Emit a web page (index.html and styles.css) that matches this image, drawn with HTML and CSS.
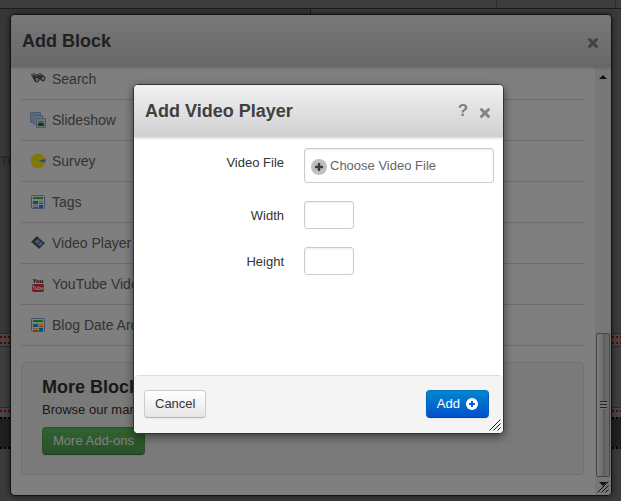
FILE: index.html
```html
<!DOCTYPE html>
<html lang="en">
<head>
  <meta charset="UTF-8">
  <meta name="viewport" content="width=device-width, initial-scale=1">
  <title>Add Video Player</title>
  <link rel="stylesheet" href="styles.css">
</head>
<body>
<!-- shared icons -->
<svg class="defs" aria-hidden="true">
  <symbol id="i-close" viewBox="0 0 12 12">
    <path d="M2.5 2.5l7 7M9.5 2.5l-7 7" fill="none" stroke="currentColor" stroke-width="3" stroke-linecap="round"/>
  </symbol>
  <symbol id="i-grip" viewBox="0 0 12 12">
    <path d="M.5 11.5l11-11M4.5 11.5l7-7M8.5 11.5l3-3" fill="none" stroke="#222"/>
  </symbol>
  <symbol id="i-page" viewBox="0 0 16 16">
    <rect x="1.500" y="1.500" width="13" height="13" rx="1" fill="#fff" stroke="#86a4e8"/>
    <path d="M3 3h10v2H3z" fill="#2cd020"/>
    <path d="M3 7h5v3H3zM9 11h4v3H9z" fill="#109cff"/>
    <path d="M9 7.500h4M3 11.500h5" stroke="#ffc400"/>
    <path d="M9 9.500h4M3 13.500h5" stroke="#ff5a22"/>
  </symbol>
</svg>

<div class="page">
  <div class="toolbar"><span></span><span></span></div>
  <div class="page-top"><div>Tu</div><div></div></div>
  <div class="drop-area double"><i class="dots"></i><i class="dots"></i></div>
  <div class="page-block"></div>
  <div class="drop-area"><i class="dots"></i></div>
  <div class="dark-band"><i class="dots"></i><i class="dots"></i></div>
</div>

<div class="dialog blocks-dialog" role="dialog" aria-labelledby="blocksTitle">
  <header class="titlebar">
    <h2 id="blocksTitle">Add Block</h2>
    <button class="icon-btn" aria-label="Close"><svg><use href="#i-close"/></svg></button>
  </header>
  <div class="scroller">
    <div class="blocks">
      <ul class="block-list">
        <li><a href="#">
          <svg viewBox="0 0 16 16"><path d="M1 3.500L4 2l3 1.500L10 2l3 1.500 2 4-2.500 2.500-3-2-1 2L5 11z" fill="#5c5c5c"/><path d="M2 4l3-1 2 3M8 4l3-1 2 2" fill="none" stroke="#ccc"/><ellipse cx="7" cy="8.500" rx="2" ry="2.500" fill="#b4d8fa" stroke="#444"/><ellipse cx="13" cy="7.500" rx="2" ry="2.500" fill="#b4d8fa" stroke="#444"/></svg>
          Search</a></li>
        <li><a href="#">
          <svg viewBox="0 0 16 16"><path d="M.5 .5h10v10H.5z" fill="#b4d4f6" stroke="#98b8dc"/><path d="M3.500 3.500h9v9h-9z" fill="#c4e0fa" stroke="#98b8dc"/><path d="M6.500 6.500h9v9h-9z" fill="#c9e8ff" stroke="#98b8dc"/><path d="M8 11.500q3-2 6 0V14H8z" fill="#108c18"/><path d="M9 9h4v2H9z" fill="#f09038"/></svg>
          Slideshow</a></li>
        <li><a href="#">
          <svg viewBox="0 0 16 16"><circle cx="8" cy="8" r="7.500" fill="#fff020"/><path d="M8 8l7.500-2v2z" fill="#4080f0"/><path d="M8 8h7.500l-.5 2z" fill="#e8a040"/></svg>
          Survey</a></li>
        <li><a href="#"><svg><use href="#i-page"/></svg>Tags</a></li>
        <li><a href="#">
          <svg viewBox="0 0 16 16"><path d="M7 1l8 7-6 6-8-7z" fill="#4a4e5a"/><path d="M7.500 4L10 6 7 9 4.500 7zM10.500 6.500L13 8.500l-3 3L7.500 9.500z" fill="#90acf0"/><path d="M7.500 2l7 6M2 7.500l7 6" stroke="#eee" stroke-dasharray="1 1"/></svg>
          Video Player</a></li>
        <li><a href="#">
          <svg class="youtube" viewBox="0 0 16 16"><text x="8" y="7">You</text><rect x="2" y="8" width="12" height="8" rx="2"/><text class="tube" x="8" y="14">Tube</text></svg>
          YouTube Video</a></li>
        <li><a href="#"><svg><use href="#i-page"/></svg>Blog Date Archive</a></li>
      </ul>
      <section class="more">
        <h3>More Blocks</h3>
        <p>Browse our marketplace</p>
        <button class="btn success">More Add-ons</button>
      </section>
    </div>
    <div class="scrollbar" aria-hidden="true">
      <i class="arrow up"></i>
      <div class="thumb"><i></i></div>
      <i class="arrow down"></i>
    </div>
  </div>
  <svg class="grip"><use href="#i-grip"/></svg>
</div>

<div class="overlay">
  <form class="dialog video-dialog" role="dialog" aria-labelledby="videoTitle" onsubmit="return false;">
    <header class="titlebar">
      <h2 id="videoTitle">Add Video Player</h2>
      <button type="button" class="icon-btn help" aria-label="Help">?</button>
      <button type="button" class="icon-btn" aria-label="Close"><svg><use href="#i-close"/></svg></button>
    </header>
    <div class="fields">
      <label for="file">Video File</label>
      <button type="button" class="chooser" id="file">
        <svg viewBox="0 0 16 16"><circle cx="8" cy="8" r="8" fill="#bfbfc1"/><path d="M8 4v8M4 8h8" stroke="#3c3c3c" stroke-width="2.400"/></svg>
        Choose Video File
      </button>
      <label for="width">Width</label>
      <input id="width" type="text">
      <label for="height">Height</label>
      <input id="height" type="text">
    </div>
    <footer class="actions">
      <button type="button" class="btn">Cancel</button>
      <button class="btn primary">Add
        <svg viewBox="0 0 12 12"><circle cx="6" cy="6" r="6" fill="#fff"/><path d="M6 3v6M3 6h6" stroke="#0064cc" stroke-width="2"/></svg>
      </button>
    </footer>
    <svg class="grip"><use href="#i-grip"/></svg>
  </form>
</div>
</body>
</html>
```
FILE: styles.css
```css
* {
  box-sizing: border-box;
}
html, body {
  height: 100%;
  margin: 0;
}
body {
  position: relative;
  overflow: hidden;
  background: #767676;
  font: 13px/18px "Liberation Sans", Arial, sans-serif;
  color: #333;
}
h2, h3, p, ul {
  margin: 0;
  padding: 0;
}
button, input {
  font: inherit;
  color: inherit;
}
.defs {
  position: absolute;
  width: 0;
  height: 0;
}

/* page behind the dialogs */
.page {
  height: 100%;
  overflow: hidden;
}
.toolbar {
  display: flex;
  justify-content: flex-end;
  height: 9px;
  background: #7a7a7a;
  border-bottom: 1px solid #383838;
}
.toolbar span {
  border-left: 1px solid #555;
  width: 119px;
}
.toolbar span:last-child {
  width: 6px;
}
.page-top {
  display: flex;
  height: 324px;
  background: #767676;
}
.page-top div {
  flex: 1;
}
.page-top div:first-child {
  padding-top: 143px;
  background: #6e6e6e;
  border-right: 1px solid #333;
  color: #505050;
  font-weight: bold;
}
.dots {
  display: block;
  height: 2px;
  background: repeating-linear-gradient(90deg, #c00000 0 2px, transparent 2px 4px);
}
.drop-area {
  height: 10px;
  padding-top: 2px;
  background: #8c8c8c;
  border-top: 1px solid #555;
}
.drop-area.double {
  display: flex;
  flex-direction: column;
  justify-content: space-between;
  height: 14px;
  padding-bottom: 2px;
  border-bottom: 1px solid #555;
}
.page-block {
  height: 60px;
  background: #7c7c7c;
}
.dark-band {
  display: flex;
  flex-direction: column;
  justify-content: space-between;
  height: 32px;
  background: #404040;
}
.dark-band .dots {
  background: repeating-linear-gradient(90deg, #000 0 2px, #666 2px 4px);
}

/* dialogs */
.dialog {
  display: flex;
  flex-direction: column;
  isolation: isolate;
  background: #fff;
  border: 1px solid #333;
  border-radius: 5px;
  overflow: hidden;
}
.titlebar {
  display: flex;
  align-items: center;
  gap: 10px;
  height: 52px;
  flex: none;
  padding: 0 12px 0 11px;
  background: linear-gradient(#f1f1f1, #d0d0d0);
  box-shadow: 0 1px 3px rgba(0, 0, 0, .2);
  z-index: 1;
}
.titlebar h2 {
  flex: 1;
  font-size: 18px;
  line-height: 24px;
  color: #404040;
}
.icon-btn {
  width: 12px;
  height: 18px;
  padding: 0;
  border: 0;
  background: none;
  color: #8c8080;
  cursor: pointer;
}
.icon-btn svg {
  display: block;
  width: 12px;
  height: 12px;
  margin-top: 4px;
}
.icon-btn.help {
  font-size: 17px;
  font-weight: bold;
  color: #808080;
}
.grip {
  position: absolute;
  right: 2px;
  bottom: 2px;
  width: 12px;
  height: 12px;
}

.blocks-dialog {
  position: absolute;
  inset: 14px 9px 5px 10px;
  border-color: #222;
  box-shadow: 0 0 6px rgba(0, 0, 0, .6);
}
.scroller {
  display: flex;
  flex: 1;
  min-height: 0;
}
.blocks {
  flex: 1;
  padding: 0 11px 0 10px;
}
.block-list {
  margin-top: -8px;
  list-style: none;
}
.block-list li {
  border-bottom: 1px solid #ddd;
}
.block-list a {
  display: flex;
  align-items: center;
  gap: 6px;
  height: 40px;
  padding-left: 9px;
  font-size: 14px;
  color: #666;
  text-decoration: none;
}
.block-list svg {
  width: 16px;
  height: 16px;
}
.youtube text {
  font-size: 6px;
  font-weight: bold;
  text-anchor: middle;
  fill: #000;
}
.youtube rect {
  fill: #f03038;
}
.youtube .tube {
  font-size: 5px;
  fill: #fff;
}
.more {
  margin-top: 16px;
  padding: 14px 20px 19px;
  background: #f5f5f5;
  border: 1px solid #e3e3e3;
  border-radius: 4px;
}
.more h3 {
  font-size: 18px;
  line-height: 20px;
}
.more p {
  margin: 4px 0 8px;
}

.scrollbar {
  display: flex;
  flex-direction: column;
  align-items: center;
  width: 16px;
  background: #efefef;
}
.arrow {
  border: 4px solid transparent;
}
.arrow.up {
  margin-top: 4px;
  border-bottom-color: #222;
}
.arrow.down {
  margin: 5px 0;
  border-top-color: #222;
}
.thumb {
  display: flex;
  align-items: center;
  justify-content: center;
  width: 14px;
  height: 144px;
  margin-top: auto;
  border: 1px solid #888;
  border-radius: 2px;
  background: linear-gradient(90deg, #f8f8f8, #e0e0e0 45%, #bbb 50%, #ddd);
}
.thumb i {
  width: 7px;
  height: 8px;
  background: repeating-linear-gradient(#444 0 1px, #eee 1px 3px);
}

.overlay {
  position: absolute;
  inset: 0;
  display: grid;
  place-items: center;
  padding: 16px 0 0 16px;
  background: rgba(0, 0, 0, .5);
}
.video-dialog {
  position: relative;
  width: 60%;
  min-width: 371px;
  box-shadow: 0 3px 8px rgba(0, 0, 0, .5);
}

/* form */
.fields {
  display: grid;
  grid-template-columns: 149px 1fr;
  column-gap: 20px;
  row-gap: 18px;
  min-height: 238px;
  align-content: start;
  padding: 11px 9px 0 1px;
}
.fields label {
  padding-top: 6px;
  text-align: right;
}
.fields input {
  width: 50px;
  height: 28px;
}
.fields input, .chooser {
  padding: 4px 6px;
  border: 1px solid #ccc;
  border-radius: 3px;
  background: #fff;
  box-shadow: inset 0 1px 2px rgba(0, 0, 0, .08);
}
.chooser {
  display: flex;
  align-items: center;
  gap: 3px;
  height: 35px;
  padding-top: 6px;
  color: #666;
  cursor: pointer;
}
.chooser svg {
  width: 16px;
  height: 16px;
  margin-top: 2px;
}
.actions {
  display: flex;
  justify-content: space-between;
  padding: 14px 14px 15px 10px;
  background: #f4f4f4;
  border-top: 1px solid #ddd;
  border-radius: 5px 5px 0 0;
}

.btn {
  display: inline-flex;
  align-items: center;
  gap: 6px;
  height: 28px;
  padding: 0 10px;
  border: 1px solid #ccc;
  border-bottom-color: #b3b3b3;
  border-radius: 4px;
  background: linear-gradient(#fff, #e6e6e6);
  box-shadow: 0 1px 2px rgba(0, 0, 0, .05);
  cursor: pointer;
}
.btn svg {
  width: 12px;
  height: 12px;
}
.btn.primary {
  border-color: #0074c4 #0060c0 #0044b0;
  background: linear-gradient(#0088cc, #0050cc);
  color: #fff;
}
.btn.success {
  border-color: #51a351 #51a351 #387038;
  background: linear-gradient(#62c462, #51a351);
  color: #fff;
}
```
